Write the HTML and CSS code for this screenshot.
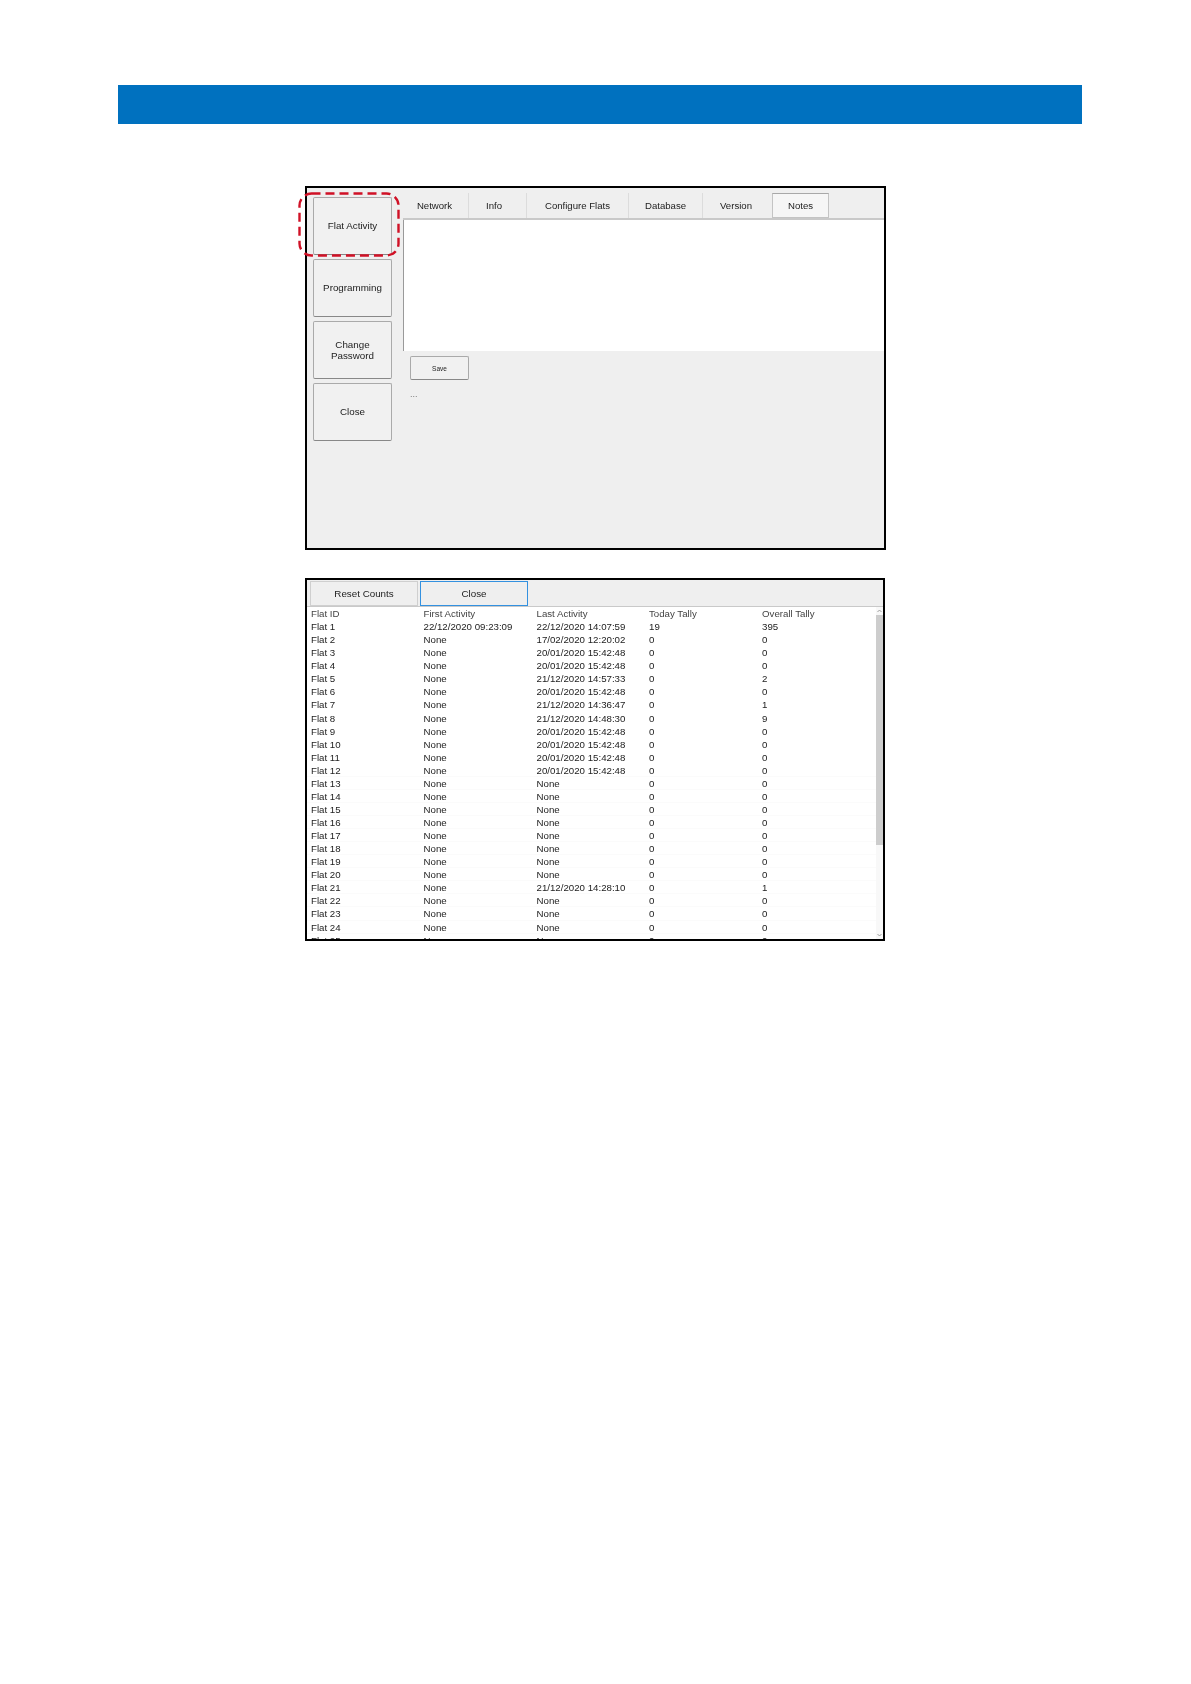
FILE: index.html
```html
<!DOCTYPE html>
<html lang="en">
<head>
  <meta charset="UTF-8" />
  <title>Flat Activity</title>
  <link rel="stylesheet" href="styles.css">
</head>
<body>

  <div class="top-bar"></div>

  <!-- Settings window -->
  <div class="shot settings">
    <div class="side-menu">
      <button class="side-btn">Flat Activity</button>
      <button class="side-btn">Programming</button>
      <button class="side-btn">Change<br>Password</button>
      <button class="side-btn">Close</button>
    </div>

    <div class="main-panel">
      <div class="tabs">
        <span class="tab tab-network">Network</span>
        <span class="tab tab-info">Info</span>
        <span class="tab tab-flats">Configure Flats</span>
        <span class="tab tab-db">Database</span>
        <span class="tab tab-version">Version</span>
        <span class="tab tab-notes">Notes</span>
      </div>
      <div class="notes-box"></div>
      <button class="save-btn">Save</button>
      <div class="dots">...</div>
    </div>

    <svg class="callout" width="105" height="67" viewBox="0 0 105 67">
      <rect x="1.5" y="1.5" width="99" height="62" rx="12" fill="none" stroke="#d01126" stroke-width="2.4" stroke-dasharray="9 5"/>
    </svg>
  </div>

  <!-- Activity window -->
  <div class="shot activity">
    <div class="toolbar">
      <button class="tool-btn">Reset Counts</button>
      <button class="tool-btn tool-focus">Close</button>
    </div>
    <div class="list">
      <div class="scrollbar">
        <svg class="arrow" width="7" height="8" viewBox="0 0 7 8"><path d="M1.5 5 L3.5 3 L5.5 5" fill="none" stroke="#888" stroke-width="0.8"/></svg>
        <span class="thumb"></span>
        <svg class="arrow arrow-down" width="7" height="8" viewBox="0 0 7 8"><path d="M1.5 3 L3.5 5 L5.5 3" fill="none" stroke="#888" stroke-width="0.8"/></svg>
      </div>
      <div class="row head"><span>Flat ID</span><span>First Activity</span><span>Last Activity</span><span>Today Tally</span><span>Overall Tally</span></div>
      <div class="row"><span>Flat 1</span><span>22/12/2020 09:23:09</span><span>22/12/2020 14:07:59</span><span>19</span><span>395</span></div>
      <div class="row"><span>Flat 2</span><span>None</span><span>17/02/2020 12:20:02</span><span>0</span><span>0</span></div>
      <div class="row"><span>Flat 3</span><span>None</span><span>20/01/2020 15:42:48</span><span>0</span><span>0</span></div>
      <div class="row"><span>Flat 4</span><span>None</span><span>20/01/2020 15:42:48</span><span>0</span><span>0</span></div>
      <div class="row"><span>Flat 5</span><span>None</span><span>21/12/2020 14:57:33</span><span>0</span><span>2</span></div>
      <div class="row"><span>Flat 6</span><span>None</span><span>20/01/2020 15:42:48</span><span>0</span><span>0</span></div>
      <div class="row"><span>Flat 7</span><span>None</span><span>21/12/2020 14:36:47</span><span>0</span><span>1</span></div>
      <div class="row"><span>Flat 8</span><span>None</span><span>21/12/2020 14:48:30</span><span>0</span><span>9</span></div>
      <div class="row"><span>Flat 9</span><span>None</span><span>20/01/2020 15:42:48</span><span>0</span><span>0</span></div>
      <div class="row"><span>Flat 10</span><span>None</span><span>20/01/2020 15:42:48</span><span>0</span><span>0</span></div>
      <div class="row"><span>Flat 11</span><span>None</span><span>20/01/2020 15:42:48</span><span>0</span><span>0</span></div>
      <div class="row"><span>Flat 12</span><span>None</span><span>20/01/2020 15:42:48</span><span>0</span><span>0</span></div>
      <div class="row"><span>Flat 13</span><span>None</span><span>None</span><span>0</span><span>0</span></div>
      <div class="row"><span>Flat 14</span><span>None</span><span>None</span><span>0</span><span>0</span></div>
      <div class="row"><span>Flat 15</span><span>None</span><span>None</span><span>0</span><span>0</span></div>
      <div class="row"><span>Flat 16</span><span>None</span><span>None</span><span>0</span><span>0</span></div>
      <div class="row"><span>Flat 17</span><span>None</span><span>None</span><span>0</span><span>0</span></div>
      <div class="row"><span>Flat 18</span><span>None</span><span>None</span><span>0</span><span>0</span></div>
      <div class="row"><span>Flat 19</span><span>None</span><span>None</span><span>0</span><span>0</span></div>
      <div class="row"><span>Flat 20</span><span>None</span><span>None</span><span>0</span><span>0</span></div>
      <div class="row"><span>Flat 21</span><span>None</span><span>21/12/2020 14:28:10</span><span>0</span><span>1</span></div>
      <div class="row"><span>Flat 22</span><span>None</span><span>None</span><span>0</span><span>0</span></div>
      <div class="row"><span>Flat 23</span><span>None</span><span>None</span><span>0</span><span>0</span></div>
      <div class="row"><span>Flat 24</span><span>None</span><span>None</span><span>0</span><span>0</span></div>
      <div class="row"><span>Flat 25</span><span>None</span><span>None</span><span>0</span><span>0</span></div>
    </div>
  </div>

</body>
</html>
```

FILE: styles.css
```css
* {
  box-sizing: border-box;
}

body {
  margin: 0;
  padding-top: 85px;
  background: #fff;
  font-family: 'Liberation Sans', Arial, sans-serif;
  color: #222;
}

button {
  font-family: inherit;
  color: inherit;
  padding: 0;
}

.top-bar {
  height: 39px;
  margin: 0 109px 0 118px;
  background: #0071bf;
}

.shot {
  position: relative;
  margin-left: 305px;
  border: 2px solid #000;
  background: #efefef;
  filter: blur(0.3px);
}

/* Settings window */
.settings {
  display: flex;
  width: 581px;
  height: 364px;
  margin-top: 62px;
}

.side-menu {
  display: flex;
  flex-direction: column;
  gap: 4px;
  width: 96px;
  padding: 9px 0 0 6px;
}

.side-btn {
  width: 79px;
  height: 58px;
  background: #f1f1f1;
  border: 1px solid #aaa;
  border-bottom-color: #888;
  border-radius: 2px;
  font-size: 9.8px;
  line-height: 11.5px;
}

.main-panel {
  flex: 1;
  min-width: 0;
}

.tabs {
  position: relative;
  display: flex;
  height: 32px;
  padding-top: 5px;
  border-bottom: 2px solid #c9c9c9;
}

.tab {
  display: flex;
  align-items: center;
  justify-content: center;
  height: 25px;
  border-right: 1px solid #dcdcdc;
  font-size: 9.6px;
}

.tab-network { width: 66px; padding-right: 2px; }
.tab-info { width: 58px; padding-right: 7px; }
.tab-flats { width: 102px; }
.tab-db { width: 74px; }
.tab-version { width: 69px; padding-right: 3px; border-right: 0; }

.tab-notes {
  width: 57px;
  background: #f6f6f6;
  border: 1px solid #c4c4c4;
  border-top-color: #a8a8a8;
}

.notes-box {
  width: 100%;
  height: 131px;
  background: #fff;
  border-left: 1px solid #9a9a9a;
}

.save-btn {
  display: block;
  width: 59px;
  height: 24px;
  margin: 5px 0 0 7px;
  background: #f1f1f1;
  border: 1px solid #aaa;
  border-bottom-color: #888;
  border-radius: 2px;
  font-size: 6.5px;
}

.dots {
  margin: 9px 0 0 7px;
  font-size: 9px;
  line-height: 10px;
  color: #777;
}

.callout {
  position: absolute;
  left: -9px;
  top: 4px;
}

/* Activity window */
.activity {
  width: 580px;
  height: 363px;
  margin-top: 28px;
  overflow: hidden;
}

.toolbar {
  display: flex;
  gap: 2px;
  height: 27px;
  padding: 1px 0 0 3px;
  border-bottom: 1px solid #c9c9c9;
}

.tool-btn {
  width: 108px;
  height: 25px;
  background: #efefef;
  border: 1px solid #cfcfcf;
  font-size: 9.8px;
}

.tool-focus {
  border-color: #3391e0;
}

.list {
  position: relative;
  height: 332px;
  overflow: hidden;
  background: #fff;
}

.row {
  display: grid;
  grid-template-columns: 112.5px 113px 112.5px 113px 1fr;
  height: 13.07px;
  padding-left: 4px;
  font-size: 9.7px;
  line-height: 13.07px;
  white-space: nowrap;
}

/* faint separators start at Flat 12 */
.row:nth-child(n+14) {
  box-shadow: inset 0 -1px #fbfbfb;
}

.head {
  color: #444;
}

.scrollbar {
  position: absolute;
  top: 0;
  right: 0;
  bottom: 0;
  display: flex;
  flex-direction: column;
  align-items: center;
  width: 7px;
  background: #f8f8f8;
}

.thumb {
  width: 7px;
  height: 230px;
  background: #cdcdcd;
}

.arrow {
  display: block;
  flex: none;
}

.arrow-down {
  margin-top: auto;
}
```
